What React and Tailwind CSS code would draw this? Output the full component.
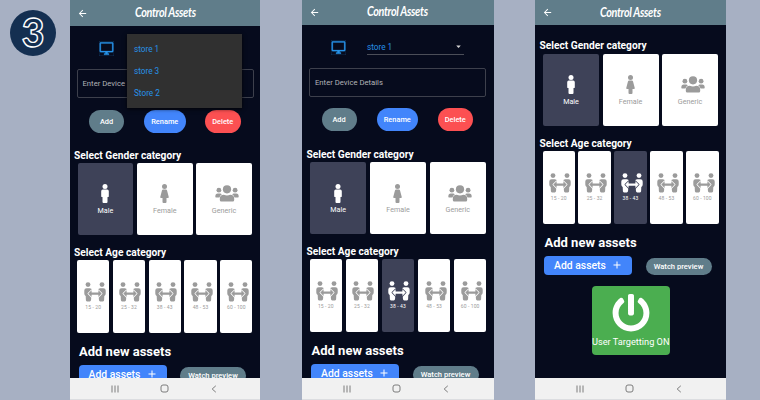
import React from 'react';
import { FaPowerOff } from 'react-icons/fa';
import { MdArrowBack, MdOutlineDesktopWindows, MdArrowDropDown, MdAdd } from 'react-icons/md';

const AGES = ['15 - 20', '25 - 32', '38 - 43', '48 - 53', '60 - 100'];

function MaleIcon() {
  return (
    <svg viewBox="0 0 8 19" className="h-[19px] w-[8px]" fill="currentColor">
      <circle cx="4" cy="2.5" r="2.5" />
      <path d="M1.8 5.6h4.4A1.6 1.6 0 0 1 7.8 7.200v5a.9.9 0 0 1-.9.9h-.4v4.800a1 1 0 0 1-1 1h-3a1 1 0 0 1-1-1v-4.800h-.4a.9.9 0 0 1-.9-.9v-5a1.600 1.600 0 0 1 1.600-1.600Z" />
    </svg>
  );
}

function FemaleIcon() {
  return (
    <svg viewBox="0 0 9 19" className="h-[19px] w-[9px]" fill="currentColor">
      <circle cx="4.500" cy="2.500" r="2.500" />
      <path d="M3.200 5.600h2.600q1 0 1.250 1l1.700 6.300q.2 1-.8 1H6.500v4a1 1 0 0 1-1 1h-2a1 1 0 0 1-1-1v-4H1.050q-1 0-.8-1l1.700-6.300q.25-1 1.250-1Z" />
    </svg>
  );
}

function GroupIcon() {
  return (
    <svg viewBox="0 0 24 17" className="ml-[5px] h-[17px] w-[24px]" fill="currentColor">
      <circle cx="12" cy="4.300" r="4.100" />
      <circle cx="3.900" cy="5.200" r="2.400" />
      <circle cx="20.100" cy="5.200" r="2.400" />
      <path d="M2.800 8.600h2.300q1 0 1.700.7-2 1.200-2.300 3.300H1q-.7 0-.7-.8 0-3.200 2.500-3.200ZM21.200 8.600h-2.300q-1 0-1.700.7 2 1.200 2.300 3.300H23q.7 0 .7-.8 0-3.200-2.500-3.200Z" />
      <path d="M8.800 9.800q3.200 1.200 6.400 0 4 0 4 4.200v1q0 1.500-1.500 1.500H6.300q-1.500 0-1.500-1.500v-1q0-4.200 4-4.200Z" />
    </svg>
  );
}

function PeopleIcon({ gap }) {
  return (
    <svg viewBox="0 0 22 20" className="ml-[3px] h-[20px] w-[22px]" fill="currentColor">
      <circle cx="4" cy="2.600" r="2.400" />
      <circle cx="18" cy="2.600" r="2.400" />
      <path d="M2.600 6.200h3.200q1.900 0 2.200 2L7 18.300q-.2 1.100-1.200 1.100H3q-1 0-1.100-1.100L1.700 14Q.3 13 .3 11.500v-3q0-2.300 2.300-2.300ZM19.400 6.200h-3.200q-1.900 0-2.200 2l1 10.100q.2 1.100 1.200 1.100H19q1 0 1.100-1.100l.2-4.300q1.400-1 1.400-2.500v-3q0-2.300-2.300-2.300Z" />
      <path
        d="M4.300 11.600 7.600 8.200v2.400h6.800V8.200l3.300 3.400-3.300 3.400v-2.300H7.600V15Z"
        strokeWidth="1.500"
        strokeLinejoin="round"
        paintOrder="stroke"
        stroke={gap}
      />
    </svg>
  );
}

function Header({ className }) {
  return (
    <div className={`flex shrink-0 items-center bg-[#607d8a] text-white ${className}`}>
      <MdArrowBack className="ml-[7px] h-[11px] w-[11px]" />
      <div className="ml-[47px] w-[62px] origin-left scale-x-[0.8] -translate-y-[1px] whitespace-nowrap text-[13.5px] leading-[14px] font-bold italic tracking-[-0.4px] [font-family:Lato,cursive]">
        Control Assets
      </div>
    </div>
  );
}

function NavBar() {
  return (
    <div className="flex h-[22px] shrink-0 items-center border-b border-[#dcdde0] bg-[#f1f1f1] text-[#7c7c7c]">
      <svg viewBox="0 0 8 8" className="ml-[41px] h-[8px] w-[8px]" stroke="currentColor" strokeWidth="1">
        <path d="M1 .5v7M4 .5v7M7 .5v7" />
      </svg>
      <svg viewBox="0 0 9 9" className="ml-[41px] h-[9px] w-[9px]" fill="none" stroke="currentColor" strokeWidth="1">
        <rect x="1" y="1" width="7" height="7" rx="2" />
      </svg>
      <svg viewBox="0 0 6 8" className="ml-[42px] h-[8px] w-[6px]" fill="none" stroke="currentColor" strokeWidth="1">
        <path d="M4.8.8 1.2 4l3.6 3.2" />
      </svg>
    </div>
  );
}

function Heading({ children }) {
  return <h2 className="ml-[4.5px] h-[14px] whitespace-nowrap text-[10.2px] leading-[15px] font-bold text-white">{children}</h2>;
}

function GenderCard({ label, active, children }) {
  return (
    <div
      className={`flex h-[72px] flex-1 flex-col items-center rounded-[2px] pt-[20px] ${
        active ? 'bg-[#3e4258] text-white' : 'bg-white text-[#9b9b9b]'
      }`}
    >
      <div className="flex h-[22px] items-center justify-center">{children}</div>
      <span className="text-[7.2px] leading-[12px]">{label}</span>
    </div>
  );
}

function GenderRow() {
  return (
    <div className="mx-[8px] flex gap-[3.5px]">
      <GenderCard label="Male" active>
        <MaleIcon />
      </GenderCard>
      <GenderCard label="Female">
        <FemaleIcon />
      </GenderCard>
      <GenderCard label="Generic">
        <GroupIcon />
      </GenderCard>
    </div>
  );
}

function AgeRow({ selected }) {
  return (
    <div className="mx-[7.5px] flex gap-[3.5px]">
      {AGES.map((age) => (
        <div
          key={age}
          className={`flex h-[72.5px] min-w-0 flex-1 flex-col items-center rounded-[2px] pt-[22px] ${
            age === selected ? 'bg-[#3e4258] text-white' : 'bg-white text-[#9b9b9b]'
          }`}
        >
          <PeopleIcon gap={age === selected ? '#3e4258' : '#ffffff'} />
          <span className="mt-[1px] text-[5px] leading-[9px] tracking-[0.1px] whitespace-nowrap">{age}</span>
        </div>
      ))}
    </div>
  );
}

function AddAssets() {
  return (
    <>
      <h2 className="ml-[9.5px] h-[18px] text-[13px] leading-[18px] font-bold whitespace-nowrap text-white">Add new assets</h2>
      <div className="mt-[4px] ml-[9px] flex items-center">
        <div className="flex h-[19px] w-[88px] items-center rounded-[4px] bg-[#4285fb] pl-[10px] text-white">
          <span className="w-[57px] pt-[0.5px] text-[10.4px] leading-[15px] font-medium whitespace-nowrap">Add assets</span>
          <MdAdd className="h-[12px] w-[12px]" />
        </div>
        <div className="mt-[2px] ml-[13.5px] flex h-[17px] w-[66px] items-center justify-center rounded-full bg-[#607d8a] pt-[1px] text-[7.6px] leading-[12px] font-medium whitespace-nowrap text-white">
          Watch preview
        </div>
      </div>
    </>
  );
}

function Actions() {
  return (
    <div className="ml-[19.5px] flex text-[7.4px] font-medium text-white">
      <div className="flex h-[22.5px] w-[35px] items-center justify-center rounded-full bg-[#607d8a]">Add</div>
      <div className="ml-[20px] flex h-[22.5px] w-[41.5px] items-center justify-center rounded-full bg-[#4285fb]">Rename</div>
      <div className="ml-[19.5px] flex h-[22.5px] w-[35.5px] items-center justify-center rounded-full bg-[#fc5052]">Delete</div>
    </div>
  );
}

function DeviceForm({ open }) {
  return (
    <div className="relative">
      <div className="flex h-[16px] items-center">
        <MdOutlineDesktopWindows className="ml-[29px] h-[15px] w-[15px] text-[#2792e8]" stroke="currentColor" strokeWidth="0.4" />
        {!open && (
          <div className="ml-[21px] flex h-[16px] w-[97px] items-center justify-between border-b border-[#4b4e58] text-[8.2px] text-[#2792e8]">
            <span className="pt-[1px]">store 1</span>
            <MdArrowDropDown className="h-[11px] w-[11px] text-[#d5d5d5]" />
          </div>
        )}
      </div>
      <div className="mt-[13px] ml-[7px] flex h-[29px] w-[177px] items-center rounded-[2px] border border-[#3d404c] pl-[5px] text-[7.7px] text-[#b3b4b8]">
        {open ? 'Enter Device' : 'Enter Device Details'}
      </div>
      {open && (
        <div className="absolute -top-[6px] left-[57px] flex h-[74px] w-[115px] flex-col justify-center bg-[#303030] pl-[7.5px] text-[8.2px] text-[#2792e8] shadow-[0_1px_4px_rgba(0,0,0,0.8)]">
          <div className="h-[22.3px] leading-[22.3px]">store 1</div>
          <div className="h-[22.3px] leading-[22.3px]">store 3</div>
          <div className="h-[22.3px] leading-[22.3px]">Store 2</div>
        </div>
      )}
    </div>
  );
}

function Phone({ className, header, children }) {
  return (
    <div className={`flex h-[400px] shrink-0 flex-col overflow-hidden bg-[#060b1d] ${className}`}>
      <Header className={header} />
      <div className="min-h-0 flex-1 overflow-hidden">{children}</div>
      <NavBar />
    </div>
  );
}

export default function App() {
  return (
    <div className="flex h-[400px] w-[760px] overflow-hidden bg-[#a7b0c3] [font-family:Roboto,sans-serif]">
      <div className="w-[69.5px] shrink-0 pt-[9.5px] pl-[10px]">
        <div className="flex h-[46px] w-[46px] items-center justify-center rounded-full bg-[#142f51]">
          <span className="text-[39px] leading-none font-black text-transparent [-webkit-text-stroke:1.4px_white] [font-family:Lato,sans-serif]">
            3
          </span>
        </div>
      </div>

      <Phone className="w-[190.5px]" header="h-[26px]">
        <div className="h-[14px]" />
        <DeviceForm open />
        <div className="h-[12px]" />
        <Actions />
        <div className="h-[15px]" />
        <Heading>Select Gender category</Heading>
        <div className="h-[1px]" />
        <GenderRow />
        <div className="h-[10.5px]" />
        <Heading>Select Age category</Heading>
        <div className="h-[1px]" />
        <AgeRow />
        <div className="h-[10px]" />
        <AddAssets />
      </Phone>

      <Phone className="ml-[42px] w-[192px]" header="h-[24.5px]">
        <div className="h-[14.5px]" />
        <DeviceForm />
        <div className="h-[11px]" />
        <Actions />
        <div className="h-[16.5px]" />
        <Heading>Select Gender category</Heading>
        <div className="h-[1px]" />
        <GenderRow />
        <div className="h-[10px]" />
        <Heading>Select Age category</Heading>
        <div className="h-[1px]" />
        <AgeRow selected="38 - 43" />
        <div className="h-[10px]" />
        <AddAssets />
      </Phone>

      <Phone className="ml-[41px] w-[191px]" header="h-[25px]">
        <div className="h-[13px]" />
        <Heading>Select Gender category</Heading>
        <div className="h-[1.5px]" />
        <GenderRow />
        <div className="h-[10.5px]" />
        <Heading>Select Age category</Heading>
        <div className="h-[1px]" />
        <AgeRow selected="38 - 43" />
        <div className="h-[10px]" />
        <AddAssets />
        <div className="mt-[11px] ml-[56.5px] flex h-[69px] w-[78.5px] flex-col items-center rounded-[4px] bg-[#4bae50] pt-[8.5px] text-white">
          <FaPowerOff className="h-[38px] w-[38px]" />
          <span className="mt-[4px] text-[9.2px] leading-[12px] whitespace-nowrap">User Targetting ON</span>
        </div>
      </Phone>
    </div>
  );
}
